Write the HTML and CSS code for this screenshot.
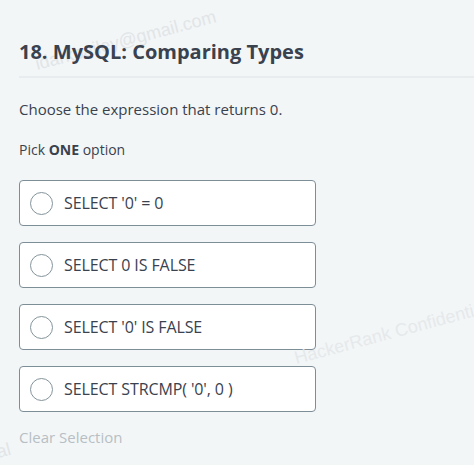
FILE: index.html
```html
<!DOCTYPE html>
<html>
<head>
<meta charset="utf-8">
<link rel="stylesheet" href="styles.css">
</head>
<body>
<div class="page">
  <div class="wm wm-email">idarkbailey@gmail.com</div>
  <h1 class="title">18. MySQL: Comparing Types</h1>
  <div class="divider"></div>
  <p class="question">Choose the expression that returns 0.</p>
  <p class="pick">Pick <b>ONE</b> option</p>
  <div class="options">
    <label class="option"><span class="radio"></span><span class="opt-text">SELECT '0' = 0</span></label>
    <label class="option"><span class="radio"></span><span class="opt-text">SELECT 0 IS FALSE</span></label>
    <label class="option"><span class="radio"></span><span class="opt-text">SELECT '0' IS FALSE</span></label>
    <label class="option"><span class="radio"></span><span class="opt-text">SELECT STRCMP( '0', 0 )</span></label>
  </div>
  <div class="clear">Clear Selection</div>
  <div class="wm wm-hr">HackerRank Confidential</div>
  <div class="wm wm-al">al</div>
</div>
</body>
</html>
```
FILE: styles.css
```css
html, body {
  margin: 0;
  padding: 0;
  background: #f3f6f7;
}
body {
  font-family: "Open Sans", "Noto Sans", sans-serif;
  color: #39424e;
  overflow: hidden;
}
.page {
  position: relative;
  width: 474px;
  height: 465px;
  padding: 38px 0 0 19px;
  box-sizing: border-box;
  overflow: hidden;
}
.title {
  position: relative;
  z-index: 1;
  margin: 0;
  font-size: 20px;
  line-height: 28px;
  font-weight: 700;
  color: #39424e;
}
.divider {
  margin-top: 10px;
  height: 2px;
  background: #e8ecee;
}
.question {
  margin: 21px 0 0;
  font-size: 15px;
  line-height: 20px;
  color: #39424e;
}
.pick {
  margin: 21px 0 0;
  font-size: 14px;
  line-height: 20px;
  color: #39424e;
}
.pick b {
  font-weight: 700;
}
.options {
  margin-top: 20px;
  display: flex;
  flex-direction: column;
  gap: 16px;
  width: 297px;
}
.option {
  display: flex;
  align-items: center;
  height: 46px;
  box-sizing: border-box;
  border: 1px solid #7d8e97;
  border-radius: 4px;
  background: #ffffff;
  padding-left: 10px;
}
.radio {
  width: 23px;
  height: 23px;
  box-sizing: border-box;
  border: 1px solid #84949c;
  border-radius: 50%;
  background: #fff;
  flex: none;
}
.opt-text {
  margin-left: 11px;
  font-size: 16px;
  color: #39424e;
  letter-spacing: -0.1px;
}
.clear {
  margin-top: 15px;
  font-size: 15px;
  line-height: 20px;
  color: #b7bfc4;
}
.wm {
  position: absolute;
  font-family: "Liberation Sans", Arial, sans-serif;
  font-size: 18px;
  line-height: 1;
  color: #e1e5e7;
  white-space: nowrap;
  transform-origin: left bottom;
  transform: rotate(-15deg);
  pointer-events: none;
}
.wm-email {
  left: 38px;
  top: 55px;
}
.wm-hr {
  left: 297px;
  top: 349px;
  color: #e5e9eb;
}
.wm-al {
  left: -1px;
  top: 443px;
}
```
